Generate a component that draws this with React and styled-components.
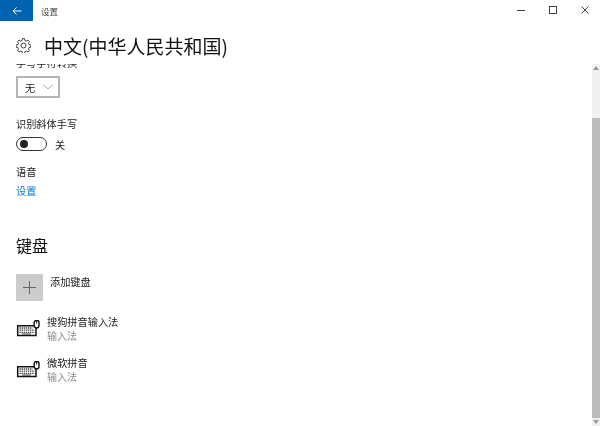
import styled, { createGlobalStyle } from "styled-components";

const CJK = `"Noto Sans CJK SC", "Liberation Sans", sans-serif`;

const GlobalStyle = createGlobalStyle`
  html, body {
    margin: 0;
    padding: 0;
    background: #fff;
  }
  * {
    box-sizing: border-box;
  }
`;

function KeyboardIcon() {
  return (
    <svg width="24" height="18" viewBox="0 1 24 18" fill="none" stroke="#111">
      <path d="M18 6.700H1.700V16.500H20V9" strokeWidth="1.500" />
      <rect x="18.200" y="1.200" width="4.800" height="7.800" rx="2.400" strokeWidth="1.400" />
      <path d="M20.600 1.500v3" strokeWidth="1" />
      <path
        d="M3.500 9h13M3.500 11.200h15M3.500 13.300h15"
        stroke="#444"
        strokeWidth="1.300"
        strokeDasharray="1.400 0.700"
      />
      <path d="M6 15h9" stroke="#444" strokeWidth="1" />
    </svg>
  );
}

function InputMethod({ name }) {
  return (
    <MethodRow>
      <KeyboardIcon />
      <MethodText>
        <MethodName>{name}</MethodName>
        <MethodKind>输入法</MethodKind>
      </MethodText>
    </MethodRow>
  );
}

export default function App() {
  return (
    <Page>
      <GlobalStyle />
      <TitleBar>
        <BackButton>
          <svg width="10" height="10" viewBox="0 0 10 10" fill="none" stroke="#fff" strokeWidth="1">
            <path d="M9.500 5H1M4.500 1.500L1 5l3.500 3.500" />
          </svg>
        </BackButton>
        <WindowTitle>设置</WindowTitle>
        <WindowControls>
          <WindowButton>
            <svg width="10" height="10" viewBox="0 0 10 10" fill="none" stroke="#444">
              <path d="M1 5.500h8" />
            </svg>
          </WindowButton>
          <WindowButton>
            <svg width="10" height="10" viewBox="0 0 10 10" fill="none" stroke="#444">
              <rect x="1.500" y="1.500" width="7" height="7" />
            </svg>
          </WindowButton>
          <WindowButton>
            <svg width="10" height="10" viewBox="0 0 10 10" fill="none" stroke="#444">
              <path d="M1.500 1.500l7 7M8.500 1.500l-7 7" />
            </svg>
          </WindowButton>
        </WindowControls>
      </TitleBar>

      <Header>
        <svg width="15" height="15" viewBox="0 0 24 24" fill="none" stroke="#333" strokeWidth="1.500">
          <path d="M10.300 2h3.400l.6 3 2.300 1 2.600-1.700 2.400 2.400-1.700 2.600 1 2.300 3 .6v3.400l-3 .6-1 2.300 1.700 2.600-2.400 2.400-2.600-1.700-2.300 1-.6 3h-3.400l-.6-3-2.300-1-2.600 1.700-2.400-2.400 1.700-2.600-1-2.300-3-.6v-3.400l3-.6 1-2.300-1.700-2.600 2.400-2.400 2.600 1.700 2.300-1z" transform="translate(0 -1)" />
          <circle cx="12" cy="12" r="4" />
        </svg>
        <PageTitle>中文(中华人民共和国)</PageTitle>
      </Header>

      <Body>
        <Content>
          <ClippedLabel>手写字符转换</ClippedLabel>
          <SelectBox>
            无
            <svg width="10" height="6" viewBox="0 0 10 6" fill="none" stroke="#aaa">
              <path d="M.5.5L5 5 9.500.5" />
            </svg>
          </SelectBox>

          <Label>识别斜体手写</Label>
          <ToggleRow>
            <Toggle>
              <ToggleKnob />
            </Toggle>
            关
          </ToggleRow>

          <SpeechLabel>语音</SpeechLabel>
          <SettingsLink>设置</SettingsLink>

          <SectionTitle>键盘</SectionTitle>

          <AddRow>
            <AddTile>
              <svg width="13" height="13" viewBox="0 0 13 13" stroke="#666">
                <path d="M6.500 0v13M0 6.500h13" />
              </svg>
            </AddTile>
            <AddLabel>添加键盘</AddLabel>
          </AddRow>

          <InputMethod name="搜狗拼音输入法" />
          <InputMethod name="微软拼音" />
        </Content>

        <ScrollBar>
          <ScrollArrow>
            <svg width="6" height="4" viewBox="0 0 6 4" fill="#999">
              <path d="M3 0l3 4H0z" />
            </svg>
          </ScrollArrow>
          <ScrollGap />
          <ScrollThumb />
          <ScrollArrow>
            <svg width="6" height="4" viewBox="0 0 6 4" fill="#999">
              <path d="M0 0h6L3 4z" />
            </svg>
          </ScrollArrow>
        </ScrollBar>
      </Body>
    </Page>
  );
}

const Page = styled.div`
  width: 600px;
  height: 426px;
  display: flex;
  flex-direction: column;
  overflow: hidden;
  background: #fff;
  color: #222;
  font-family: ${CJK};
  font-size: 10px;
  filter: blur(0.25px);
`;

const TitleBar = styled.div`
  height: 21px;
  flex: none;
  display: flex;
  align-items: center;
`;

const BackButton = styled.div`
  width: 33px;
  height: 21px;
  display: flex;
  align-items: center;
  justify-content: center;
  background: #0063b1;
`;

const WindowTitle = styled.div`
  margin-left: 8px;
  font-size: 8.500px;
  color: #444;
`;

const WindowControls = styled.div`
  margin: -2px -1px 0 auto;
  display: flex;
`;

const WindowButton = styled.div`
  width: 32px;
  height: 20px;
  display: flex;
  align-items: center;
  justify-content: center;
`;

const Header = styled.div`
  height: 43px;
  flex: none;
  display: flex;
  align-items: center;
  gap: 13px;
  padding: 6px 0 0 16px;
`;

const PageTitle = styled.h1`
  margin: 0;
  font-size: 19px;
  font-weight: 400;
  line-height: 28px;
  color: #111;
`;

const Body = styled.div`
  flex: 1;
  min-height: 0;
  display: flex;
`;

const Content = styled.div`
  flex: 1;
  min-width: 0;
  overflow: hidden;
  padding-left: 16px;
`;

const Label = styled.div`
  font-size: 10.200px;
  line-height: 14px;
  color: #222;
`;

const ClippedLabel = styled(Label)`
  margin-top: -8px;
`;

const SelectBox = styled.div`
  width: 44px;
  height: 22px;
  margin: 6px 0 19px;
  padding: 0 5px 0 7px;
  display: flex;
  align-items: center;
  justify-content: space-between;
  border: 2px solid #b4b4b4;
  font-size: 10.200px;
`;

const ToggleRow = styled.div`
  display: flex;
  align-items: center;
  gap: 8px;
  margin-top: 5px;
  height: 16px;
  font-size: 10.200px;
`;

const Toggle = styled.div`
  width: 31px;
  height: 14px;
  padding-left: 3px;
  display: flex;
  align-items: center;
  border: 1.500px solid #333;
  border-radius: 7px;
`;

const ToggleKnob = styled.div`
  width: 8px;
  height: 8px;
  border-radius: 50%;
  background: #222;
`;

const SpeechLabel = styled(Label)`
  margin-top: 13px;
`;

const SettingsLink = styled.div`
  margin-top: 5px;
  font-size: 10.200px;
  line-height: 14px;
  color: #0078d7;
`;

const SectionTitle = styled.h2`
  margin: 36px 0 0;
  font-size: 16px;
  font-weight: 400;
  line-height: 22px;
  color: #111;
`;

const AddRow = styled.div`
  display: flex;
  gap: 7px;
  margin-top: 18px;
`;

const AddTile = styled.div`
  width: 27px;
  height: 27px;
  display: flex;
  align-items: center;
  justify-content: center;
  background: #ccc;
`;

const AddLabel = styled.div`
  font-size: 10.200px;
  line-height: 14px;
  margin-top: 1px;
`;

const MethodRow = styled.div`
  display: flex;
  align-items: center;
  gap: 7px;
  height: 27px;
  margin-top: 14px;
`;

const MethodText = styled.div`
  display: flex;
  flex-direction: column;
`;

const MethodName = styled.div`
  font-size: 10.200px;
  line-height: 14px;
`;

const MethodKind = styled.div`
  font-size: 10px;
  line-height: 14px;
  color: #8a8a8a;
`;

const ScrollBar = styled.div`
  width: 8px;
  flex: none;
  display: flex;
  flex-direction: column;
  background: #f0f0f0;
`;

const ScrollArrow = styled.div`
  height: 8px;
  flex: none;
  display: flex;
  align-items: center;
  justify-content: center;
`;

const ScrollGap = styled.div`
  height: 46px;
  flex: none;
`;

const ScrollThumb = styled.div`
  flex: 1;
  background: #bcbcbc;
`;
